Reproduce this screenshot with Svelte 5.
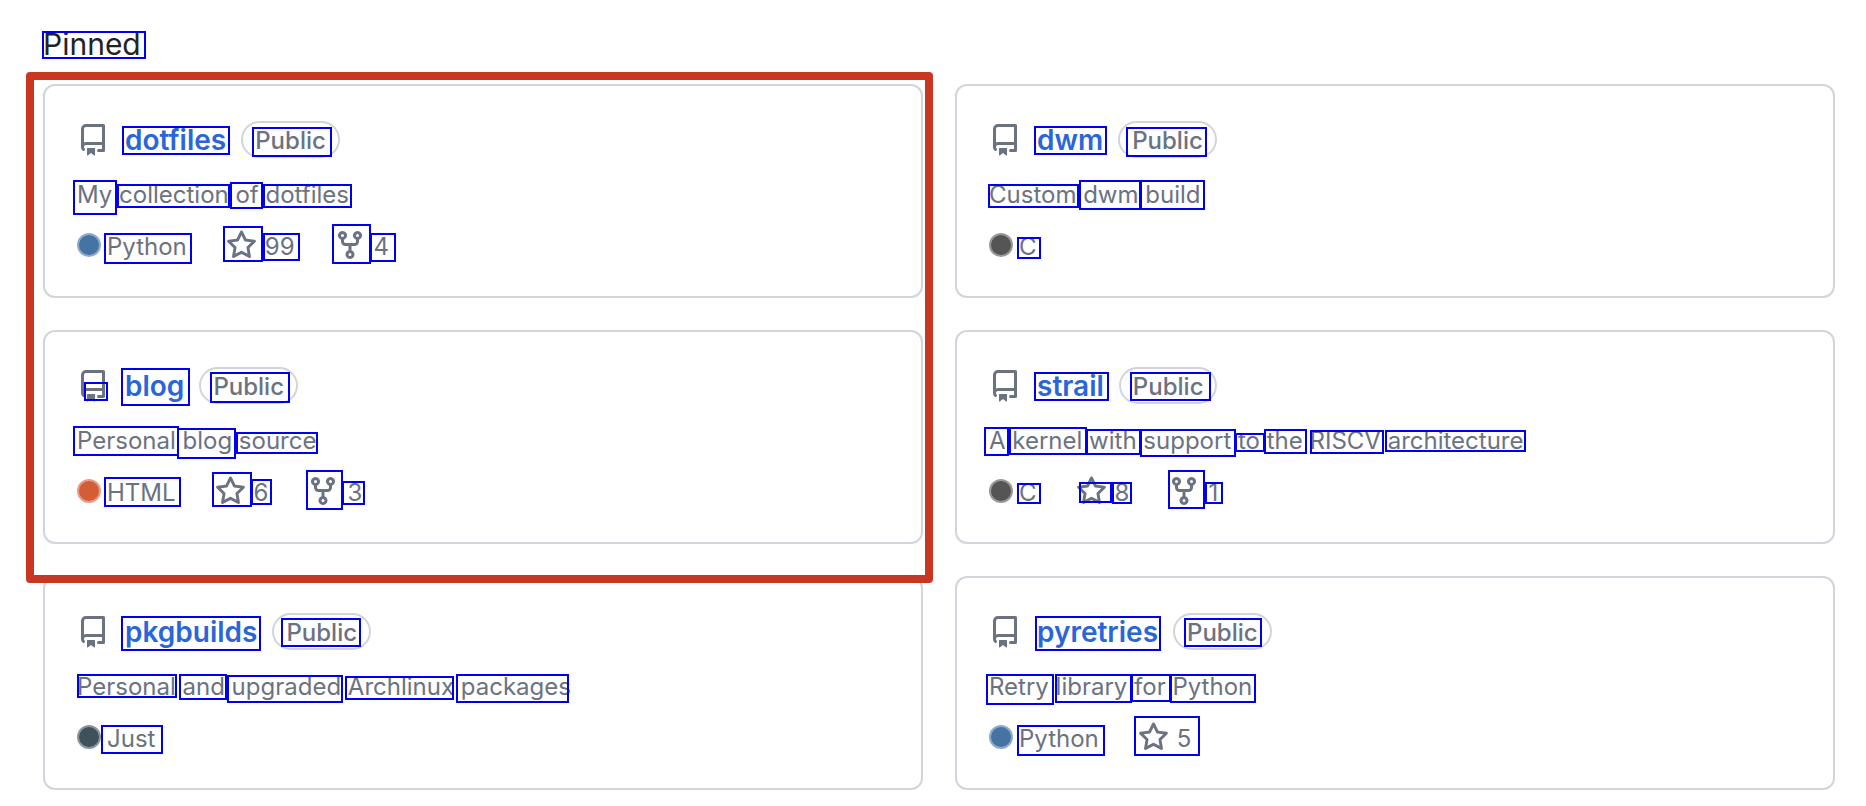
<script>
  const repo = "M2 2.5A2.5 2.5 0 0 1 4.5 0h8.75a.75.75 0 0 1 .75.75v12.5a.75.75 0 0 1-.75.75h-2.5a.75.75 0 0 1 0-1.5h1.75v-2h-8a1 1 0 0 0-.714 1.7.75.75 0 1 1-1.072 1.05A2.495 2.495 0 0 1 2 11.5Zm10.5-1h-8a1 1 0 0 0-1 1v6.708A2.486 2.486 0 0 1 4.5 9h8ZM5 12.25a.25.25 0 0 1 .25-.25h3.5a.25.25 0 0 1 .25.25v3.25a.25.25 0 0 1-.4.2l-1.45-1.087a.249.249 0 0 0-.3 0L5.4 15.7a.25.25 0 0 1-.4-.2Z";
  const star = "M8 .25a.75.75 0 0 1 .673.418l1.882 3.815 4.21.612a.75.75 0 0 1 .416 1.279l-3.046 2.97.719 4.192a.751.751 0 0 1-1.088.791L8 12.347l-3.766 1.98a.75.75 0 0 1-1.088-.79l.72-4.194L.818 6.374a.75.75 0 0 1 .416-1.28l4.21-.611L7.327.668A.75.75 0 0 1 8 .25Zm0 2.445L6.615 5.5a.75.75 0 0 1-.564.41l-3.097.45 2.24 2.184a.75.75 0 0 1 .216.664l-.528 3.084 2.769-1.456a.75.75 0 0 1 .698 0l2.77 1.456-.53-3.084a.75.75 0 0 1 .216-.664l2.24-2.183-3.096-.45a.75.75 0 0 1-.564-.41L8 2.694Z";
  const fork = "M5 5.372v.878c0 .414.336.75.75.75h4.5a.75.75 0 0 0 .75-.75v-.878a2.25 2.25 0 1 1 1.5 0v.878a2.25 2.25 0 0 1-2.25 2.25h-1.5v2.128a2.251 2.251 0 1 1-1.5 0V8.5h-1.5A2.25 2.25 0 0 1 3.5 6.25v-.878a2.25 2.25 0 1 1 1.5 0ZM5 3.25a.75.75 0 1 0-1.5 0 .75.75 0 0 0 1.5 0Zm6.75.75a.75.75 0 1 0 0-1.5.75.75 0 0 0 0 1.5Zm-3 8.75a.75.75 0 1 0-1.5 0 .75.75 0 0 0 1.5 0Z";

  const repos = [
    { name: "dotfiles", desc: "My collection of dotfiles", lang: "Python", color: "#4574a4", stars: 99, forks: 4 },
    { name: "dwm", desc: "Custom dwm build", lang: "C", color: "#555555" },
    { name: "blog", desc: "Personal blog source", lang: "HTML", color: "#d45c36", stars: 6, forks: 3 },
    { name: "strail", desc: "A kernel with support to the RISCV architecture", lang: "C", color: "#555555", stars: 8, forks: 1 },
    { name: "pkgbuilds", desc: "Personal and upgraded Archlinux packages", lang: "Just", color: "#3e525b" },
    { name: "pyretries", desc: "Retry library for Python", lang: "Python", color: "#4574a4", stars: 5 }
  ];

  // detection boxes drawn on top of the screenshot: x, y, w, h
  const boxes = [
    [42, 31, 104, 28],
    [122, 126, 108, 29], [252, 127, 80, 30], [73, 180, 44, 35], [117, 184, 113, 24], [230, 182, 33, 27], [263, 184, 89, 24],
    [104, 233, 88, 31], [223, 226, 40, 36], [263, 233, 37, 28], [332, 224, 39, 40], [370, 233, 26, 29],
    [1034, 126, 73, 29], [1126, 127, 81, 30], [988, 184, 91, 24], [1079, 180, 62, 30], [1140, 180, 65, 30], [1017, 237, 24, 22],
    [84, 382, 24, 19], [121, 368, 69, 38], [210, 372, 80, 31], [73, 426, 106, 30], [177, 428, 59, 31], [236, 432, 82, 22],
    [104, 477, 77, 30], [212, 472, 40, 35], [251, 479, 21, 26], [306, 470, 37, 40], [342, 481, 23, 24],
    [1034, 372, 75, 29], [1130, 372, 81, 29], [984, 427, 25, 29], [1009, 427, 78, 28], [1086, 429, 55, 26], [1140, 429, 96, 28],
    [1235, 433, 30, 19], [1264, 429, 43, 25], [1310, 430, 74, 24], [1385, 430, 141, 22],
    [1017, 483, 24, 21], [1079, 482, 33, 21], [1112, 482, 20, 22], [1168, 470, 37, 39], [1205, 482, 18, 22],
    [121, 616, 140, 35], [281, 618, 80, 29], [77, 674, 100, 24], [179, 674, 48, 26], [227, 675, 116, 28], [345, 676, 109, 24], [456, 674, 113, 29],
    [101, 725, 62, 29],
    [1035, 616, 126, 35], [1184, 618, 78, 29], [986, 674, 68, 31], [1055, 674, 77, 29], [1131, 674, 40, 28], [1170, 674, 86, 29],
    [1017, 725, 88, 31], [1134, 716, 66, 40]
  ];
</script>

<main>
  <h2>Pinned</h2>
  <div class="grid">
    {#each repos as r}
      <article class="card">
        <div class="head">
          <svg class="icon" viewBox="0 0 16 16" width="32" height="32"><path d={repo} /></svg>
          <a href="#top">{r.name}</a>
          <span class="pill">Public</span>
        </div>
        <p>{r.desc}</p>
        <div class="meta">
          <span class="lang">
            <span class="dot" style="background: {r.color}"></span>
            <span class="label">{r.lang}</span>
          </span>
          {#if r.stars}
            <span class="stat">
              <svg viewBox="0 0 16 16" width="31" height="31"><path d={star} /></svg>
              <span class="label">{r.stars}</span>
            </span>
          {/if}
          {#if r.forks}
            <span class="stat">
              <svg viewBox="0 0 16 16" width="32" height="32"><path d={fork} /></svg>
              <span class="label">{r.forks}</span>
            </span>
          {/if}
        </div>
      </article>
    {/each}
  </div>

  <div class="highlight"></div>
  {#each boxes as b}
    <div class="box" style="left: {b[0]}px; top: {b[1]}px; width: {b[2]}px; height: {b[3]}px"></div>
  {/each}
</main>

<style>
  :global(body) {
    background: #fff;
    font-family: Inter, "Liberation Sans", sans-serif;
  }
  main {
    position: relative;
    width: 1866px;
    height: 806px;
    padding: 28px 32px 0 43px;
    box-sizing: border-box;
    overflow: hidden;
  }
  h2 {
    margin: 0 0 23px;
    font-size: 30px;
    line-height: 33px;
    font-weight: 400;
    color: #1f2328;
  }
  .grid {
    display: grid;
    grid-template-columns: 880px 880px;
    grid-auto-rows: 214px;
    gap: 32px;
  }
  .card {
    box-sizing: border-box;
    padding: 35px 32px 0;
    border: 2px solid #d1d5db;
    border-radius: 12px;
    color: #6b7280;
  }
  .head {
    display: flex;
    align-items: center;
    height: 37px;
  }
  .icon {
    flex: none;
    margin-right: 16px;
  }
  svg {
    fill: #6b7280;
  }
  a {
    font-size: 28px;
    font-weight: 600;
    color: #2b66d9;
    text-decoration: none;
  }
  .pill {
    margin-left: 15px;
    padding: 0 12px;
    height: 37px;
    box-sizing: border-box;
    border: 2px solid #d1d5db;
    border-radius: 20px;
    font-size: 24px;
    font-weight: 500;
    line-height: 35px;
  }
  p {
    margin: 22px 0 0;
    font-size: 24px;
    line-height: 30px;
  }
  .meta {
    display: flex;
    align-items: center;
    gap: 39px;
    margin-top: 19px;
    height: 32px;
    font-size: 24px;
  }
  .lang, .stat {
    display: flex;
    align-items: center;
    gap: 8px;
  }
  .lang {
    gap: 6px;
  }
  .label {
    padding-top: 3px;
    line-height: 30px;
  }
  .dot {
    width: 24px;
    height: 24px;
    box-sizing: border-box;
    border-radius: 50%;
    border: 2px solid rgba(255, 255, 255, 0.4);
  }
  .highlight {
    position: absolute;
    left: 26px;
    top: 72px;
    width: 907px;
    height: 511px;
    box-sizing: border-box;
    border: 8px solid #c93621;
    border-radius: 4px;
  }
  .box {
    position: absolute;
    box-sizing: border-box;
    border: 2px solid #0000f0;
  }
</style>
